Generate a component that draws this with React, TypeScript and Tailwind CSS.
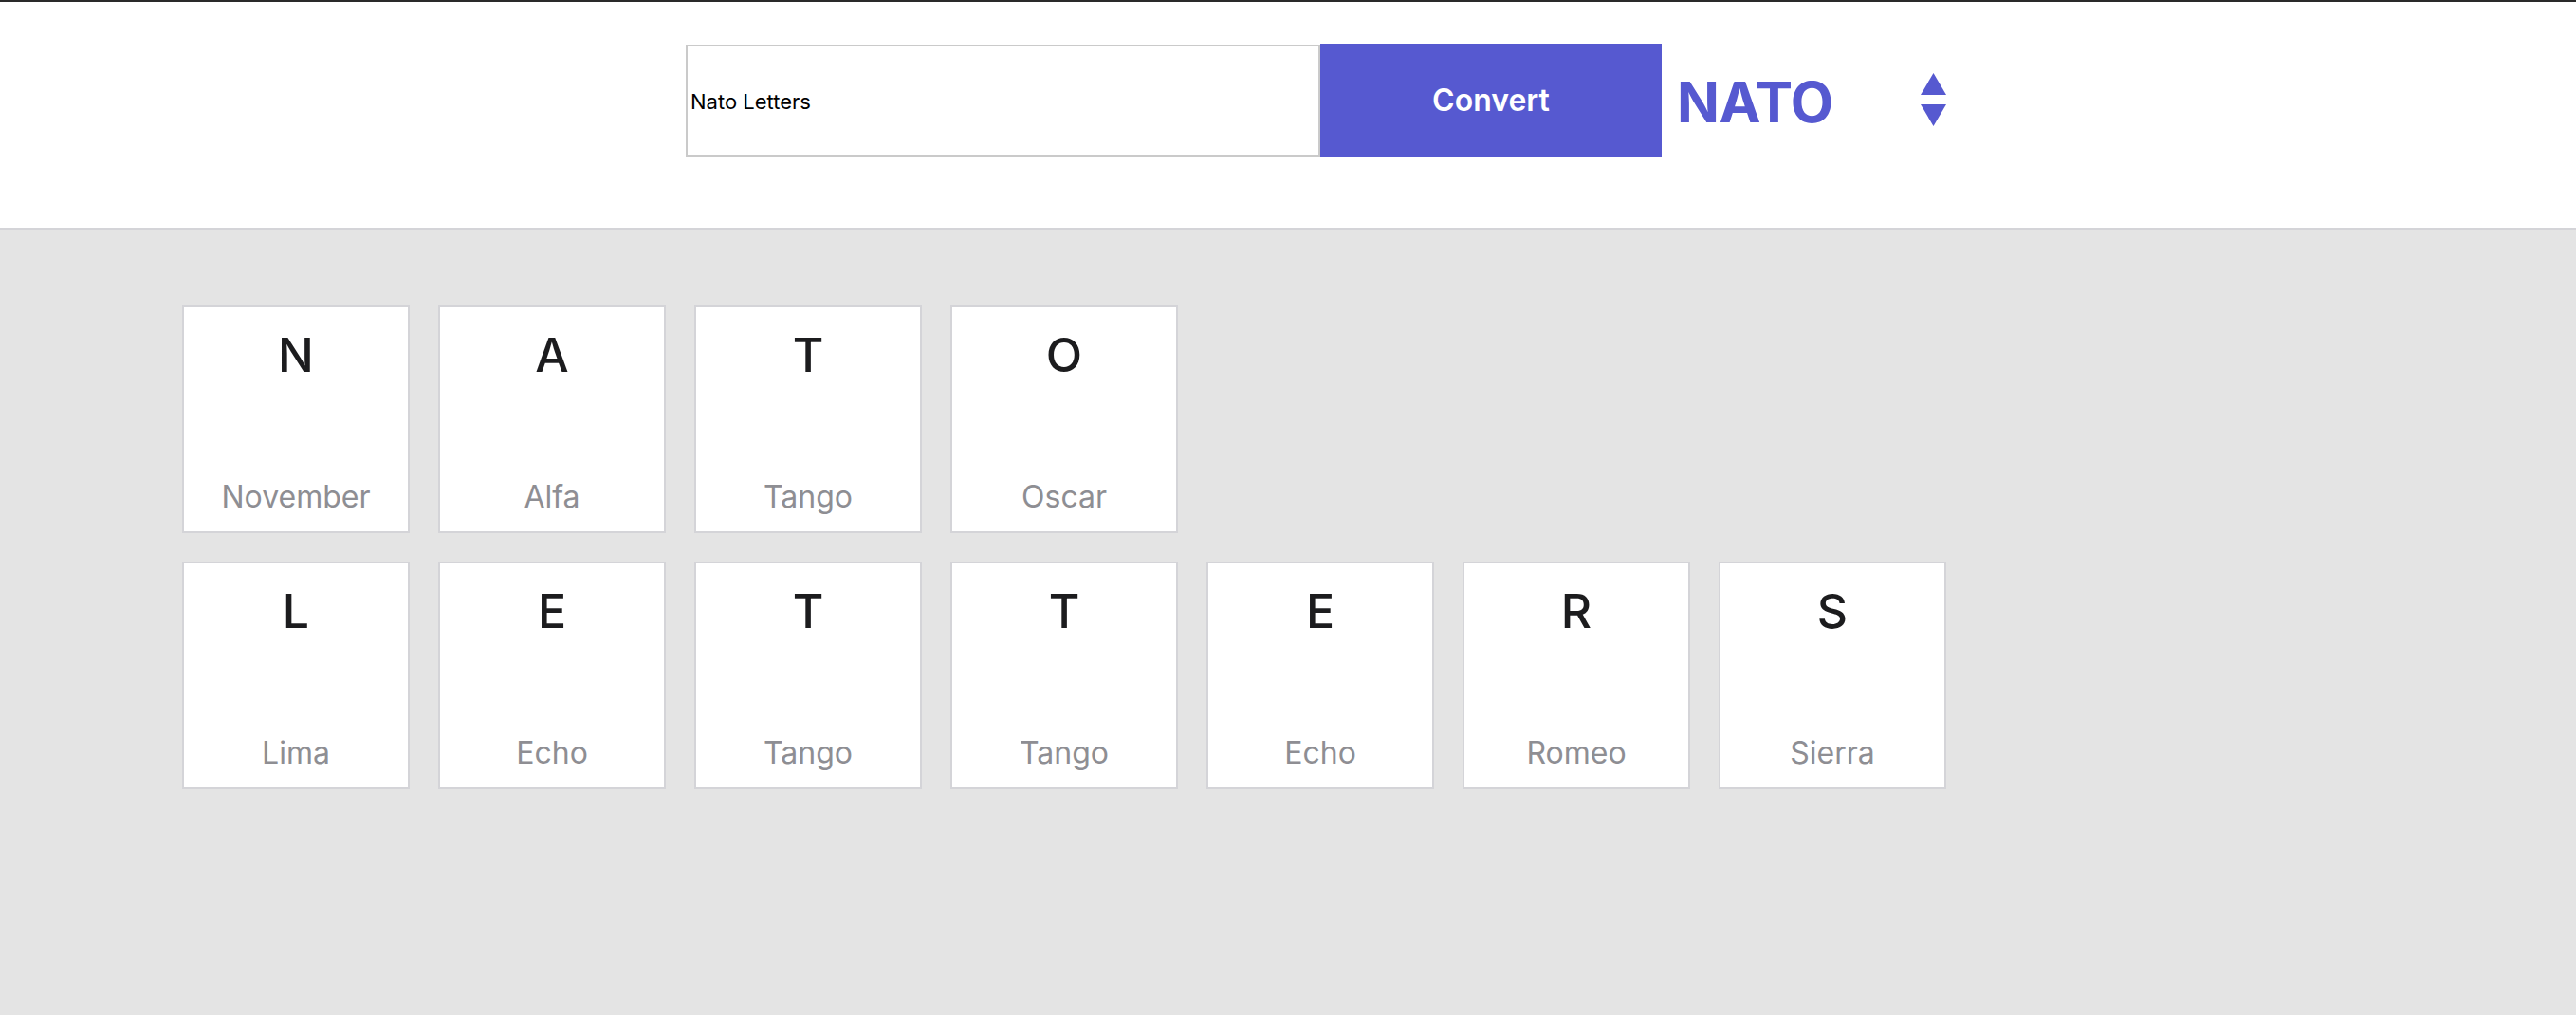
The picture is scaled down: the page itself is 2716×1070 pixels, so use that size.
import React from "react";

const words: string[] = ["NATO", "LETTERS"];

const alphabet: Record<string, string> = {
  A: "Alfa",
  B: "Bravo",
  C: "Charlie",
  D: "Delta",
  E: "Echo",
  F: "Foxtrot",
  G: "Golf",
  H: "Hotel",
  I: "India",
  J: "Juliett",
  K: "Kilo",
  L: "Lima",
  M: "Mike",
  N: "November",
  O: "Oscar",
  P: "Papa",
  Q: "Quebec",
  R: "Romeo",
  S: "Sierra",
  T: "Tango",
  U: "Uniform",
  V: "Victor",
  W: "Whiskey",
  X: "X-ray",
  Y: "Yankee",
  Z: "Zulu",
};

const LetterCard: React.FC<{ letter: string }> = ({ letter }) => {
  return (
    <div className="w-[240px] h-[240px] bg-white border-2 border-[#d4d4d8] flex flex-col items-center justify-between pt-[25px] pb-[20px]">
      <span className="text-[50px] leading-none font-medium text-[#1c1c1e]">{letter}</span>
      <span className="text-[32px] leading-none text-[#8e8e93]">
        {alphabet[letter]}
      </span>
    </div>
  );
};

const SortArrows = () => (
  <svg width="27" height="56" viewBox="0 0 27 56" className="text-[#5659d0]">
    <polygon points="13.5,0 27,23 0,23" fill="currentColor" />
    <polygon points="0,33 27,33 13.5,56" fill="currentColor" />
  </svg>
);

export default function App() {
  return (
    <div className="min-h-screen bg-[#e4e4e4] font-['Inter',sans-serif] border-t-2 border-[#2a2a2a]">
      <header className="h-[240px] bg-white border-b-2 border-[#d4d4d8] pl-[723px] pt-[44px]">
        <div className="flex items-center">
          <input
            defaultValue="Nato Letters"
            className="w-[669px] h-[118px] border-2 border-[#cacaca] px-[3px] pt-[2px] text-[22px] text-black outline-none"
          />
          <button className="w-[360px] h-[120px] bg-[#5659d0] text-white text-[32px] font-semibold">
            Convert
          </button>
          <div className="flex items-center ml-[16px]">
            <span className="text-[59px] font-bold leading-none text-[#5659d0] tracking-[-0.5px] mt-[2px]">
              NATO
            </span>
            <span className="ml-[92px] mt-[-2px]">
              <SortArrows />
            </span>
          </div>
        </div>
      </header>
      <main className="pl-[192px] pt-[80px] flex flex-col gap-[30px]">
        {words.map((word, i) => (
          <div key={i} className="flex gap-[30px]">
            {word.split("").map((ch, j) => (
              <LetterCard key={j} letter={ch} />
            ))}
          </div>
        ))}
      </main>
    </div>
  );
}
